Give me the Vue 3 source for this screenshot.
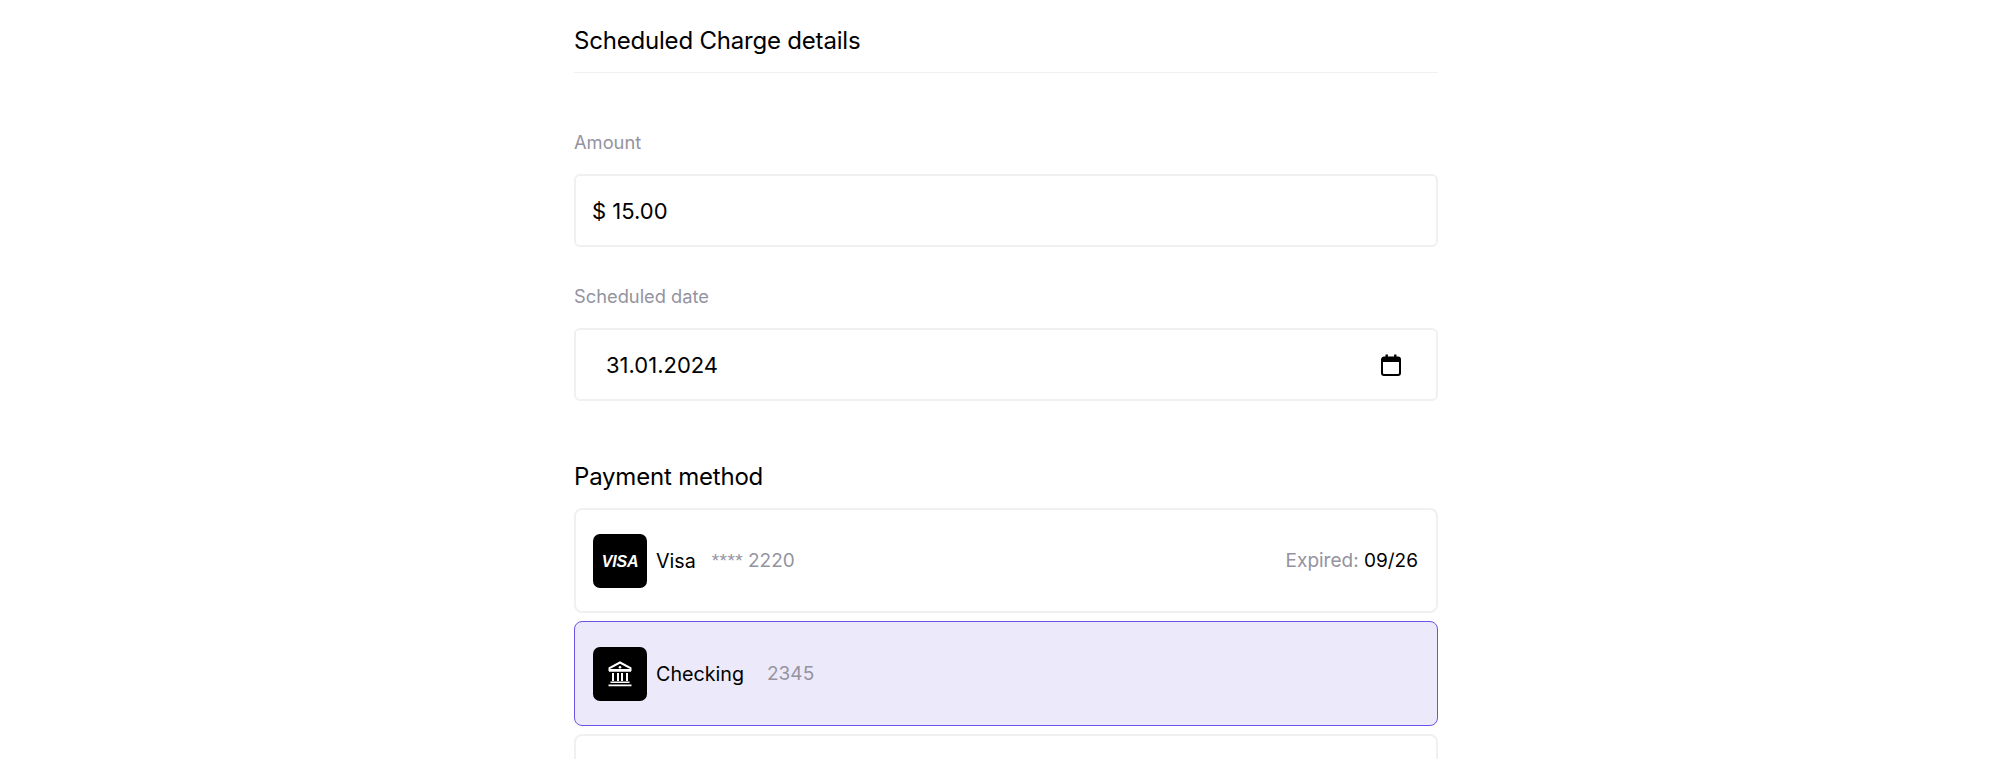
<script setup>
const methods = [
  { id: 'visa', name: 'Visa', stars: '****', num: '2220', exp: '09/26' },
  { id: 'bank', name: 'Checking', num: '2345', active: true },
  { id: 'more', empty: true },
]
</script>

<template>
  <main class="page">
    <section class="form">
      <h2 class="title">Scheduled Charge details</h2>
      <div class="fields">
        <div class="field">
          <div class="label">Amount</div>
          <div class="input">$ 15.00</div>
        </div>
        <div class="field">
          <div class="label">Scheduled date</div>
          <div class="input date">
            <span>31.01.2024</span>
            <svg class="cal" width="20" height="22" viewBox="0 0 20 22" aria-hidden="true">
              <path d="M1 5.5a2 2 0 0 1 2-2h14a2 2 0 0 1 2 2V19a2 2 0 0 1-2 2H3a2 2 0 0 1-2-2z" fill="none" stroke="#000" stroke-width="2"/>
              <path d="M1 3.5h18V8H1zM4.5 0.5h2.4v4H4.5zM13.1 0.5h2.4v4h-2.4z" fill="#000"/>
            </svg>
          </div>
        </div>
      </div>
      <h2 class="title pay">Payment method</h2>
      <div class="methods">
        <div v-for="m in methods" :key="m.id" class="method" :class="{ active: m.active }">
          <template v-if="!m.empty">
            <div class="logo">
              <span v-if="m.id === 'visa'" class="visa">VISA</span>
              <svg v-else width="24" height="26" viewBox="0 0 24 26" aria-hidden="true">
                <path d="M12 1.5 22.500 7v2h-21V7z" fill="none" stroke="#fff" stroke-width="2"/>
                <circle cx="12" cy="6.300" r="1.300" fill="#fff"/>
                <path d="M1 9h22v1.800H1zM4 12h2v8H4zM9 12h2v8H9zM13 12h2v8h-2zM18 12h2v8h-2zM2.500 20.500h19v1.500h-19zM0.500 23.500h23v1.800h-23z" fill="#fff"/>
              </svg>
            </div>
            <span class="name">{{ m.name }}</span>
            <span class="num"><span v-if="m.stars" class="stars">{{ m.stars }}</span>{{ m.num }}</span>
            <span v-if="m.exp" class="exp">Expired: <b>{{ m.exp }}</b></span>
          </template>
        </div>
      </div>
    </section>
  </main>
</template>

<style>
html, body { margin: 0; height: 759px; overflow: hidden; background: #fff; }
</style>

<style scoped>
.page {
  display: flex;
  justify-content: center;
  padding-left: 12px;
  font-family: Inter, "Liberation Sans", sans-serif;
  color: #000;
  height: 759px;
  overflow: hidden;
}
.form { width: 864px; padding-top: 26px; }
.title { margin: 0; font-size: 24px; line-height: 30px; font-weight: 430; letter-spacing: -0.2px; }
.title:first-child { padding-bottom: 16px; border-bottom: 1px solid #f0f0f2; }
.fields { display: flex; flex-direction: column; gap: 37px; margin-top: 57px; }
.label { font-size: 18.3px; line-height: 24px; color: #94939f; margin-bottom: 20px; }
.input {
  box-sizing: border-box;
  height: 73px;
  border: 2px solid #f0f0f2;
  border-radius: 6px;
  padding: 0 16px;
  display: flex;
  align-items: center;
  font-size: 22px;
}
.date { padding: 0 35px 0 30px; justify-content: space-between; }
.pay { margin-top: 61px; }
.methods { display: flex; flex-direction: column; gap: 8px; margin-top: 16px; }
.method {
  box-sizing: border-box;
  height: 105px;
  border: 2px solid #f0f0f2;
  border-radius: 8px;
  padding: 0 18px 0 17px;
  display: flex;
  align-items: center;
  font-size: 19.7px;
}
.method.active { background: #ece9fa; border: 1px solid #6b53e6; padding: 0 19px 0 18px; }
.logo {
  width: 54px;
  height: 54px;
  border-radius: 7px;
  background: #000;
  display: flex;
  align-items: center;
  justify-content: center;
  margin-right: 9px;
  flex: none;
}
.visa { color: #fff; font: italic 700 16px "Liberation Sans", sans-serif; letter-spacing: -0.2px; padding-top: 2px; }
.num { color: #94939f; margin-left: 23px; font-size: 19px; }
.stars { font-family: "Liberation Sans", sans-serif; font-size: 19px; letter-spacing: 0.4px; margin-right: 5px; margin-left: -7px; }
.exp { margin-left: auto; color: #94939f; font-size: 19px; }
.exp b { color: #000; font-weight: 400; }
</style>
